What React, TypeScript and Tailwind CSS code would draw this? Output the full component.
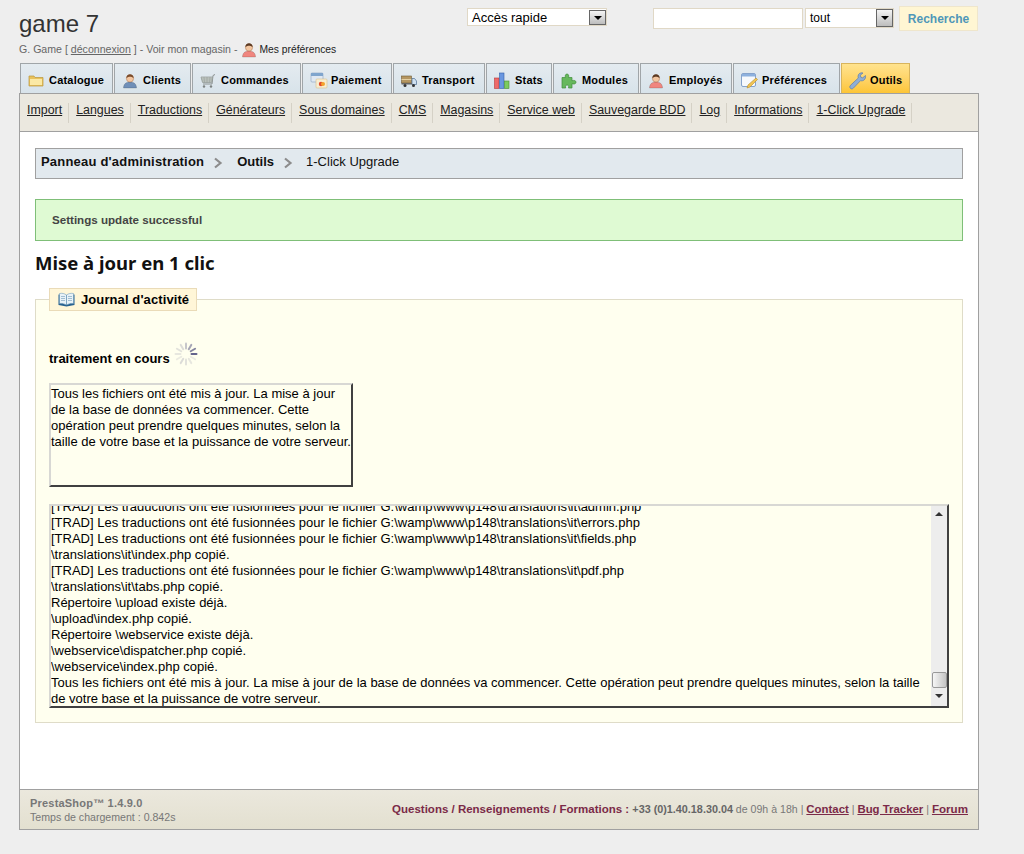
import React from 'react';

const FolderIcon = () => (
  <svg width="16" height="16" viewBox="0 0 16 16">
    <path d="M1 3h5l1 1.500h8V13H1z" fill="#e8c25c" stroke="#b9963c" strokeWidth="0.7" />
    <path d="M2 6h12v6H2z" fill="#fbe9a5" />
  </svg>
);

const PersonIcon = ({ body, hair }: { body: string; hair: string }) => (
  <svg width="16" height="16" viewBox="0 0 16 16">
    <path d="M1.500 15c0-4 2.500-6 6.500-6s6.500 2 6.500 6z" fill={body} stroke="#00000040" strokeWidth="0.6" />
    <circle cx="8" cy="5.500" r="3.600" fill="#f3c6a0" stroke="#a8714a" strokeWidth="0.5" />
    <path d="M4.400 5.200C4.300 2.500 6 1.200 8 1.200s3.700 1.300 3.600 4C10.500 4 9 3.700 8 3.700S5.500 4 4.400 5.200z" fill={hair} />
  </svg>
);

const CartIcon = () => (
  <svg width="16" height="16" viewBox="0 0 16 16" fill="none">
    <path d="M15 1.500l-2 1L12 11H3" stroke="#8b9190" strokeWidth="1" />
    <path d="M1 4h11.500l-.8 5.500H2.500z" fill="#c8cec9" stroke="#969d99" strokeWidth="0.8" />
    <path d="M1.500 6h10.500M2 8h9.800M4 4l.5 5.500M7 4v5.500M10 4l-.4 5.500" stroke="#8f9693" strokeWidth="0.5" />
    <circle cx="4" cy="13.500" r="1.200" fill="#7c8280" />
    <circle cx="11" cy="13.500" r="1.200" fill="#7c8280" />
  </svg>
);

const PaymentIcon = () => (
  <svg width="18" height="18" viewBox="0 0 18 18">
    <rect x="1" y="1" width="12" height="9" rx="1" fill="#dfe8f2" stroke="#8aa3bf" strokeWidth="0.6" />
    <path d="M1 1h12v3H1z" fill="#7fa5cd" />
    <rect x="6" y="7" width="11" height="9" rx="1" fill="#f8edd0" stroke="#d7c08c" strokeWidth="0.6" />
    <circle cx="11" cy="12" r="2.200" fill="#e2492f" />
    <circle cx="13" cy="12" r="2" fill="#f3a32d" />
  </svg>
);

const TruckIcon = () => (
  <svg width="16" height="16" viewBox="0 0 16 16">
    <rect x="0.500" y="3" width="10" height="7" fill="#b49662" stroke="#6f5a35" strokeWidth="0.6" />
    <rect x="0.500" y="6" width="10" height="1" fill="#e3cfa2" />
    <path d="M11 5.500h2.500L15.500 8v3.500H11z" fill="#cfe0f0" stroke="#4c6d92" strokeWidth="0.7" />
    <rect x="0.500" y="10" width="10.500" height="1.500" fill="#666" />
    <circle cx="4" cy="12.500" r="1.500" fill="#333" />
    <circle cx="12.500" cy="12.500" r="1.500" fill="#333" />
  </svg>
);

const ChartIcon = () => (
  <svg width="16" height="17" viewBox="0 0 16 17">
    <rect x="0.500" y="6" width="4.500" height="10.500" fill="#ee6a6a" stroke="#b73b3b" strokeWidth="0.6" />
    <rect x="5.500" y="1" width="4.500" height="15.500" fill="#6a97e0" stroke="#345fa8" strokeWidth="0.6" />
    <rect x="10.500" y="9" width="4.500" height="7.500" fill="#7ccb5f" stroke="#4a8d35" strokeWidth="0.6" />
  </svg>
);

const PuzzleIcon = () => (
  <svg width="16" height="16" viewBox="0 0 16 16">
    <path d="M1 4.500h3.500C3.800 2.500 4.500 1 6 1s2.200 1.500 1.500 3.500H11v3.200c2-.7 4-.2 4 1.500s-2 2.200-4 1.500V15H7.500c.6-1.800 0-3-1.400-3s-2 1.200-1.400 3H1z" fill="#66b85c" stroke="#3f8c3a" strokeWidth="0.7" />
  </svg>
);

const PrefsIcon = () => (
  <svg width="17" height="17" viewBox="0 0 17 17">
    <rect x="0.500" y="1.500" width="14" height="13" rx="1.500" fill="#f6f9fc" stroke="#6b8fc0" strokeWidth="0.8" />
    <path d="M1 2h13v2.500H1z" fill="#8db1de" />
    <path d="M15 6l1.500 1.500L9 15l-3 1 1-3z" fill="#f1c553" stroke="#b88b2b" strokeWidth="0.6" />
  </svg>
);

const WrenchIcon = () => (
  <svg width="18" height="18" viewBox="0 0 18 18">
    <path d="M16.500 3.500l-2.800 2.300-1.900-.6-.5-2L14 1c-2.500-.8-5 .7-5 3.500 0 .6.100 1 .3 1.500L1.500 13.300c-1 1-.9 2.200-.1 3s2 .8 2.900-.1l7.300-7.600c2.700 1 5.500-1.500 4.900-5.100z" fill="#8faed6" stroke="#5d7ca8" strokeWidth="0.7" />
  </svg>
);

const BookIcon = () => (
  <svg width="17" height="15" viewBox="0 0 17 15">
    <path d="M0.500 2.500L8.500 3.500l8-1V13l-8 1.500L.5 13z" fill="#27618f" />
    <path d="M1.500 1.500c2.500-.5 5 0 7 1.500v10c-2-1.300-4.500-1.800-7-1.500zM15.500 1.500c-2.500-.5-5 0-7 1.500v10c2-1.300 4.500-1.800 7-1.500z" fill="#e9f2f7" stroke="#5d8db0" strokeWidth="0.5" />
    <path d="M3 4.500h4M3 6.500h4M3 8.500h4M10 4.500h4M10 6.500h4M10 8.500h4" stroke="#8fb0c8" strokeWidth="0.8" />
  </svg>
);

const Chevron = () => (
  <svg width="10" height="12" viewBox="0 0 10 12" fill="none">
    <path d="M2 1.500L7.500 6 2 10.500" stroke="#8c8c8c" strokeWidth="2.200" />
  </svg>
);

const Spinner = () => {
  const spokes = Array.from({ length: 12 }, (_, i) => i);
  return (
    <svg width="24" height="24" viewBox="0 0 24 24">
      {spokes.map(i => (
        <rect
          key={i}
          x="11"
          y="0.500"
          width="2"
          height="7"
          rx="1"
          fill="#5c5c86"
          opacity={i < 4 ? 0.35 + i * 0.2 : 0.12 + (i % 4) * 0.03}
          transform={`rotate(${i * 30} 12 12)`}
        />
      ))}
    </svg>
  );
};

const SelectArrow = ({ className }: { className: string }) => (
  <span className={`flex items-center justify-center border border-[#666] bg-gradient-to-b from-[#f4f4f4] to-[#bdbdbd] ${className}`}>
    <span className="h-0 w-0 border-x-[4px] border-t-[4px] border-x-transparent border-t-black" />
  </span>
);

const tabs = [
  { label: 'Catalogue', width: 'w-[93px]', icon: <FolderIcon /> },
  { label: 'Clients', width: 'w-[77px]', icon: <PersonIcon body="#6f8fb8" hair="#7a4b2a" /> },
  { label: 'Commandes', width: 'w-[109px]', icon: <CartIcon /> },
  { label: 'Paiement', width: 'w-[90px]', icon: <PaymentIcon /> },
  { label: 'Transport', width: 'w-[92px]', icon: <TruckIcon /> },
  { label: 'Stats', width: 'w-[66px]', icon: <ChartIcon /> },
  { label: 'Modules', width: 'w-[86px]', icon: <PuzzleIcon /> },
  { label: 'Employés', width: 'w-[92px]', icon: <PersonIcon body="#f0867f" hair="#5c3a22" /> },
  { label: 'Préférences', width: 'w-[107px]', icon: <PrefsIcon /> },
  { label: 'Outils', width: 'w-[69px]', icon: <WrenchIcon />, active: true },
];

const subLinks = ['Import', 'Langues', 'Traductions', 'Générateurs', 'Sous domaines', 'CMS', 'Magasins', 'Service web', 'Sauvegarde BDD', 'Log', 'Informations', '1-Click Upgrade'];

const logLines = [
  '[TRAD] Les traductions ont été fusionnées pour le fichier G:\\wamp\\www\\p148\\translations\\it\\errors.php',
  '[TRAD] Les traductions ont été fusionnées pour le fichier G:\\wamp\\www\\p148\\translations\\it\\fields.php',
  '\\translations\\it\\index.php copié.',
  '[TRAD] Les traductions ont été fusionnées pour le fichier G:\\wamp\\www\\p148\\translations\\it\\pdf.php',
  '\\translations\\it\\tabs.php copié.',
  'Répertoire \\upload existe déjà.',
  '\\upload\\index.php copié.',
  'Répertoire \\webservice existe déjà.',
  '\\webservice\\dispatcher.php copié.',
  '\\webservice\\index.php copié.',
  'Tous les fichiers ont été mis à jour. La mise à jour de la base de données va commencer. Cette opération peut prendre quelques minutes, selon la taille de votre base et la puissance de votre serveur.',
];

export default function App() {
  return (
    <div className="h-[854px] w-[1024px] overflow-hidden bg-[#eeeeee] pl-[19px] font-[Liberation_Sans,Arial,sans-serif] text-[12px] text-black">
      {/* header */}
      <div className="flex h-[63px]">
        <div className="w-[448px]">
          <h1 className="mt-[10px] text-[24px] leading-[28px] text-[#333333]">game 7</h1>
          <div className="mt-[3px] flex h-[18px] items-center text-[10.6px] text-[#666666]">
            <span>G. Game [ <span className="underline">déconnexion</span> ] - Voir mon magasin -</span>
            <span className="ml-[4px] mr-[2px]"><PersonIcon body="#f0867f" hair="#5c3a22" /></span>
            <span className="text-[10.3px] text-[#222222]">Mes préférences</span>
          </div>
        </div>
        <div className="relative mt-[8px] flex h-[18px] w-[140px] items-center border border-[#e0d8c6] bg-white pl-[4px] pt-[1px] text-[13px]">
          Accès rapide
          <SelectArrow className="absolute right-0 top-[1px] h-[15px] w-[17px]" />
        </div>
        <input className="ml-[46px] mt-[8px] h-[21px] w-[150px] border border-[#e0d8c6] bg-white" />
        <div className="relative ml-[2px] mt-[8px] flex h-[20px] w-[89px] items-center border border-[#e0d8c6] bg-white pl-[4px]">
          tout
          <SelectArrow className="absolute right-0 top-0 h-[18px] w-[17px]" />
        </div>
        <button className="ml-[5px] mt-[6px] h-[25px] w-[79px] border border-[#efe6cc] bg-[#fff6d3] text-[12px] font-bold text-[#4f97b8]">Recherche</button>
      </div>

      {/* tabs */}
      <div className="flex h-[30px] gap-[1px] pl-[1px]">
        {tabs.map(tab => (
          <div
            key={tab.label}
            className={`flex items-center border border-b-0 pl-[7px] pt-[4px] text-[11px] font-bold tracking-[0.2px] ${tab.width} ${tab.active ? 'border-[#d8b45c] bg-gradient-to-b from-[#ffe38e] to-[#fdc534]' : 'border-[#a0a5a8] bg-gradient-to-b from-[#e4ebf0] to-[#d8e3ea]'}`}
          >
            <span className="w-[21px] shrink-0">{tab.icon}</span>
            <span>{tab.label}</span>
          </div>
        ))}
      </div>

      {/* sub menu */}
      <div className="flex h-[39px] w-[960px] items-center border border-[#a0a0a0] bg-[#ebe8df] pl-[7px]">
        {subLinks.map(link => (
          <span key={link} className="mr-[7px] flex h-[20px] items-center border-r border-[#d5d1c6] pb-[5px] pr-[6px] text-[12.42px] text-[#222222] underline">{link}</span>
        ))}
      </div>

      {/* content */}
      <div className="h-[657px] w-[960px] border-x border-[#a0a0a0] bg-white px-[15px] pt-[16px]">
        <div className="flex h-[31px] items-center border border-[#a0a0a0] bg-[#e2e9ee] pb-[4px] pl-[5px] text-[13px] text-[#111111]">
          <span className="font-bold tracking-[0.2px]">Panneau d'administration</span>
          <span className="ml-[9px] mr-[14px] mt-[3px]"><Chevron /></span>
          <span className="font-bold">Outils</span>
          <span className="ml-[9px] mr-[13px] mt-[3px]"><Chevron /></span>
          <span>1-Click Upgrade</span>
        </div>

        <div className="mt-[20px] flex h-[42px] items-center border border-[#7fbf78] bg-[#dffad3] pl-[16px] text-[11.6px] font-bold text-[#444444]">
          Settings update successful
        </div>

        <h2 className="mt-[10px] font-[Noto_Sans,sans-serif] text-[18.5px] font-bold leading-[24px] text-[#111111]">Mise à jour en 1 clic</h2>

        <fieldset className="mt-[13px] h-[435px] border border-[#dfdcc8] bg-[#ffffef] px-[13px] pb-[15px]">
          <legend className="flex h-[23px] w-[148px] items-center gap-[6px] border border-[#eadbb8] bg-[#fff6d8] pl-[8px] text-[13px] font-bold tracking-[0.1px]">
            <BookIcon />
            Journal d'activité
          </legend>
          <div className="mt-[31px] flex h-[24px] items-end">
            <span className="-mb-[2px] text-[13px] font-bold leading-[18px]">traitement en cours</span>
            <span className="ml-[4px]"><Spinner /></span>
          </div>
          <div className="mt-[17px] h-[104px] w-[304px] border-2 border-b-[#404040] border-l-[#d8d8d4] border-r-[#404040] border-t-[#d8d8d4] pt-[1px] text-[13px] leading-[16px]">
            Tous les fichiers ont été mis à jour. La mise à jour de la base de données va commencer. Cette opération peut prendre quelques minutes, selon la taille de votre base et la puissance de votre serveur.
          </div>
          <div className="mt-[17px] flex h-[204px] w-[900px] border-2 border-b-[#404040] border-l-[#d8d8d4] border-r-[#404040] border-t-[#d8d8d4]">
            <div className="h-full w-[880px] overflow-hidden text-[13px] leading-[16px]">
              <div className="h-[9px] overflow-hidden">
                <div className="-mt-[7px]">[TRAD] Les traductions ont été fusionnées pour le fichier G:\wamp\www\p148\translations\it\admin.php</div>
              </div>
              {logLines.map(line => <div key={line}>{line}</div>)}
            </div>
            <div className="flex w-[16px] flex-col items-center bg-[#ededed]">
              <span className="mt-[6px] h-0 w-0 border-x-[4px] border-b-[4px] border-x-transparent border-b-[#333333]" />
              <span className="mt-[156px] h-[16px] w-[15px] rounded-[2px] border border-[#999999] bg-gradient-to-r from-[#f6f6f6] to-[#c4c4c4]" />
              <span className="mt-[6px] h-0 w-0 border-x-[4px] border-t-[4px] border-x-transparent border-t-[#333333]" />
            </div>
          </div>
        </fieldset>
      </div>

      {/* footer */}
      <div className="flex h-[41px] w-[960px] items-center justify-between border border-[#a0a0a0] bg-gradient-to-b from-[#ebe8dd] to-[#e3e0d0] px-[10px]">
        <div className="text-[10.6px] leading-[14px] text-[#777777]">
          <div className="text-[11px] font-bold tracking-[0.2px]">PrestaShop™ 1.4.9.0</div>
          <div>Temps de chargement : 0.842s</div>
        </div>
        <div className="pb-[1px] text-[10.6px] text-[#777777]">
          <span className="text-[11.5px] font-bold text-[#7b2a48]">Questions / Renseignements / Formations : </span>
          <span className="text-[10.8px] font-bold text-[#666666]">+33 (0)1.40.18.30.04</span> de 09h à 18h |{' '}
          <span className="text-[11.4px] font-bold text-[#7b2a48] underline">Contact</span> |{' '}
          <span className="text-[11.4px] font-bold text-[#7b2a48] underline">Bug Tracker</span> |{' '}
          <span className="text-[11.6px] font-bold text-[#7b2a48] underline">Forum</span>
        </div>
      </div>
    </div>
  );
}
